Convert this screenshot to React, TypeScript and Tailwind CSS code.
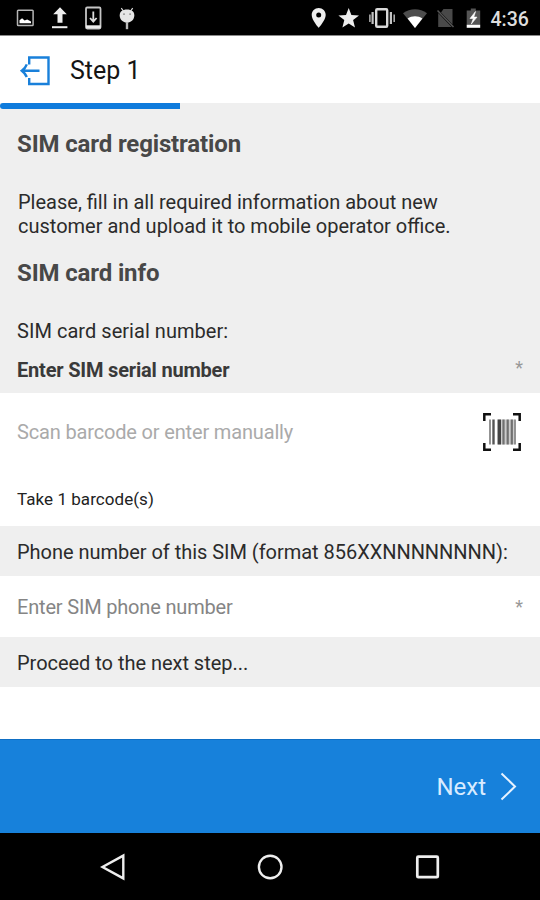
import type { ReactNode } from 'react';

function StatusBar() {
  return (
    <div className="flex h-9 shrink-0 border-b border-[#8a8a8a] bg-black">
      <svg width="540" height="35" viewBox="0 0 540 35" fill="none">
        {/* screenshot */}
        <rect x="17.5" y="10.2" width="15.6" height="15.4" rx="0.8" stroke="#b5b5b5" strokeWidth="1.5" />
        <path d="M19.5 23.3v-3l2.6-2 2.5 2.2 2.6-1 3.8 2v1.8z" fill="#fff" />
        {/* upload */}
        <path d="M60 7.2l6.8 7h-4.3v8.6h-5v-8.6h-4.3z" fill="#eee" />
        <path d="M52 27.2h15.4" stroke="#eee" strokeWidth="2" />
        {/* system update */}
        <rect x="86" y="7.5" width="14.5" height="21" rx="1.2" stroke="#c5c5c5" strokeWidth="1.8" />
        <path d="M86 25.3h14.5v3H86z" fill="#eee" />
        <path d="M93.3 11.5v9.5M90 18l3.3 3.6 3.3-3.6" stroke="#ddd" strokeWidth="1.8" />
        {/* debug */}
        <path d="M121.3 8.2l2.8 3.8M132.7 8.2l-2.8 3.8" stroke="#ddd" strokeWidth="1.2" />
        <path d="M127 9.5c4.6 0 7.3 2.2 7.3 5.7 0 4.3-3 7.3-7.3 7.3s-7.3-3-7.3-7.3c0-3.5 2.7-5.7 7.3-5.7z" fill="#e6e6e6" />
        <path d="M127 22v7.2" stroke="#bbb" strokeWidth="2.4" />
        <path d="M123.2 14.2h1.6M129.3 14.2h1.6" stroke="#777" strokeWidth="1.3" />
        {/* location */}
        <path
          d="M318.7 8c-4 0-7 3-7 6.9 0 5.1 7 12.9 7 12.9s7-7.8 7-12.9c0-3.9-3-6.9-7-6.9zm0 4.4a2.5 2.5 0 110 5 2.5 2.5 0 010-5z"
          fill="#eee"
          fillRule="evenodd"
        />
        {/* star */}
        <path d="M348.7 8l2.7 6.9 7.6.5-5.9 4.7 1.9 7.3-6.3-4-6.3 4 1.9-7.3-5.9-4.7 7.6-.5z" fill="#eee" />
        {/* vibrate */}
        <rect x="376.2" y="9.2" width="11" height="17.6" rx="1" stroke="#d9d9d9" strokeWidth="2.4" />
        <path d="M372.6 12v12M390.9 12v12" stroke="#c4c4c4" strokeWidth="2.2" />
        <path d="M369.9 14.5V22M394.2 14.5V22" stroke="#aaa" strokeWidth="1.6" />
        {/* wifi */}
        <path d="M403 13.3c7-5.4 17-5.4 24 0L415 28z" fill="#4d4d4d" />
        <path d="M407.6 18.6c4.3-3.2 10.5-3.2 14.8 0L415 28z" fill="#fff" />
        {/* no sim */}
        <path d="M443.5 9h9v15.5L441 12.5zM438.2 13l13.5 14h-13.5z" fill="#494949" />
        <path d="M437.5 10.5l16 16.5" stroke="#555" strokeWidth="1.5" />
        {/* battery */}
        <path d="M470.8 8.5h5v2h4.4v14.7h-13.5V10.5h4.1z" fill="#555" />
        <path d="M466.7 24.8h13.5v3h-13.5z" fill="#fff" />
        <path d="M475.5 11.5l-5.5 7h3.3l-2 5.6 5.7-7h-3.2z" fill="#fff" stroke="#fff" strokeWidth="0.6" />
        <text x="490.5" y="26" fill="#ddd" className="font-['Roboto',sans-serif] text-[19.5px] font-medium">
          4:36
        </text>
      </svg>
    </div>
  );
}

function Header() {
  return (
    <div className="shrink-0 bg-[#efefef]">
      <div className="flex h-[67px] items-center bg-white pl-5">
        <svg width="31" height="32" viewBox="0 0 31 32" fill="none" stroke="#1980da" strokeWidth="2.4">
          <path d="M9.2 10.5V3.5h19.3V30H9.2v-6" />
          <path d="M19.5 16.7H1.8M6.8 10.3Q5.5 14 1.8 16.7Q5.5 19.5 6.8 23" />
        </svg>
        <h1 className="pl-[19px] pt-[3px] text-[25px] leading-8 text-[#151515]">Step 1</h1>
      </div>
      <div className="h-1.5 w-[180px] rounded-l-sm bg-[#0f7bdc]" />
    </div>
  );
}

function Label({ children }: { children: ReactNode }) {
  return (
    <div className="flex h-[50px] shrink-0 items-center whitespace-nowrap bg-[#efefef] px-[17px] pt-0.5 text-xl tracking-[-0.03px] text-[#2b2b2b]">
      {children}
    </div>
  );
}

function Required() {
  return <span className="text-lg leading-5 text-[#999]">*</span>;
}

function BarcodeIcon() {
  return (
    <svg className="mr-0.5" width="38" height="38" viewBox="0 0 38 38" fill="none">
      <path d="M1.3 8V1.3H8M30 1.3h6.7V8M36.7 30v6.7H30M8 36.7H1.3V30" stroke="#111" strokeWidth="2.5" />
      <path d="M14.5 6.5h17v25h-17z" fill="#ccc" />
      <path d="M7 6.5v25M32 6.5v25" stroke="#888" strokeWidth="1.8" />
      <path d="M10.5 6.5v25" stroke="#555" strokeWidth="2.4" />
      <path d="M16.3 6.5v25" stroke="#444" strokeWidth="3.4" />
      <path d="M20.5 6.5v25M24.7 6.5v25M28.8 6.5v25" stroke="#707070" strokeWidth="2.2" />
    </svg>
  );
}

function NavigationBar() {
  return (
    <div className="flex h-[67px] shrink-0 items-center justify-between bg-black pl-[100px] pr-[99px]">
      <svg width="28" height="28" viewBox="0 0 28 28" fill="none" stroke="#eee" strokeWidth="2.4">
        <path d="M23.3 2.6v22.8L2.5 14z" />
      </svg>
      <svg width="28" height="28" viewBox="0 0 28 28" fill="none" stroke="#eee" strokeWidth="2.4">
        <circle cx="13.2" cy="14" r="11.3" />
      </svg>
      <svg width="28" height="28" viewBox="0 0 28 28" fill="none" stroke="#eee" strokeWidth="2.7">
        <rect x="4.3" y="3.7" width="20.5" height="20.5" rx="1" />
      </svg>
    </div>
  );
}

export default function App() {
  return (
    <div className="flex h-[900px] w-[540px] flex-col overflow-hidden bg-white font-['Roboto',sans-serif]">
      <StatusBar />
      <Header />

      <div className="h-[284px] shrink-0 bg-[#efefef] px-[17px] pt-5">
        <h2 className="text-2xl font-bold leading-[30px] tracking-[-0.14px] text-[#484848]">SIM card registration</h2>
        <p className="pl-px pt-8 text-xl leading-[23.5px] text-[#2b2b2b]">
          Please, fill in all required information about new
          <br />
          customer and upload it to mobile operator office.
        </p>
        <h2 className="pt-5 text-2xl font-bold leading-[30px] tracking-[-0.14px] text-[#484848]">SIM card info</h2>
        <p className="pt-[31px] text-xl leading-6 tracking-[0.04px] text-[#2b2b2b]">SIM card serial number:</p>
        <div className="flex justify-between pt-[15px] text-xl leading-6 text-[#3a3a3a]">
          <span className="font-bold tracking-[-0.19px]">Enter SIM serial number</span>
          <Required />
        </div>
      </div>

      <div className="h-[133px] shrink-0 px-[17px]">
        <div className="flex h-[78px] items-center justify-between text-xl text-[#aaa]">
          <span className="tracking-[-0.16px]">Scan barcode or enter manually</span>
          <BarcodeIcon />
        </div>
        <p className="pt-4 text-[17px] leading-6 tracking-[0.05px] text-[#222]">Take 1 barcode(s)</p>
      </div>

      <Label>Phone number of this SIM (format 856XXNNNNNNNN):</Label>
      <div className="flex h-[61px] shrink-0 items-center justify-between px-[17px] text-xl text-[#858585]">
        <span className="pt-px tracking-[-0.18px]">Enter SIM phone number</span>
        <Required />
      </div>
      <Label>Proceed to the next step...</Label>

      <div className="mt-auto flex h-[94px] shrink-0 items-center justify-end border-t border-[#0f6fc4] bg-[#1781db] pr-[23px] text-white">
        <span className="text-2xl text-[#d9ebff]">Next</span>
        <svg className="mb-0.5 ml-[13px]" width="18" height="30" viewBox="0 0 18 30" fill="none" stroke="#e6f2ff" strokeWidth="2">
          <path d="M2.5 2.5L16 15.5 2.5 28.5" />
        </svg>
      </div>
      <NavigationBar />
    </div>
  );
}
